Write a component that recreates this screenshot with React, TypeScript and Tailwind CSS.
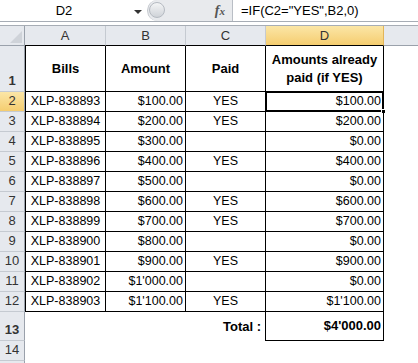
const rows: [string, string, string, string][] = [
  ["XLP-838893", "$100.00", "YES", "$100.00"],
  ["XLP-838894", "$200.00", "YES", "$200.00"],
  ["XLP-838895", "$300.00", "", "$0.00"],
  ["XLP-838896", "$400.00", "YES", "$400.00"],
  ["XLP-838897", "$500.00", "", "$0.00"],
  ["XLP-838898", "$600.00", "YES", "$600.00"],
  ["XLP-838899", "$700.00", "YES", "$700.00"],
  ["XLP-838900", "$800.00", "", "$0.00"],
  ["XLP-838901", "$900.00", "YES", "$900.00"],
  ["XLP-838902", "$1'000.00", "", "$0.00"],
  ["XLP-838903", "$1'100.00", "YES", "$1'100.00"],
];

function RowHead({ n, sel, h }: { n?: number; sel?: boolean; h: string }) {
  return (
    <div
      className={`${h} w-[25px] shrink-0 flex items-end justify-center pb-[1px] border-r border-b border-r-[#9aa1ab] border-b-[#c5cad1] text-[13px] text-[#333] ${
        sel ? "bg-gradient-to-b from-[#fbe6a6] to-[#f5cd6f]" : "bg-[#e6e9ee]"
      }`}
    >
      {n}
    </div>
  );
}

export default function App() {
  return (
    <div className="w-[418px] h-[363px] overflow-hidden bg-white text-black" style={{ fontFamily: '"Liberation Sans", Arial, sans-serif' }}>
      {/* formula bar */}
      <div className="flex h-[22px] border-b border-[#a7adb5]">
        <div className="w-[147px] relative flex items-center bg-white">
          <div className="w-[128px] text-center text-[13px]">D2</div>
          <div className="absolute left-[134px] top-[10px] w-0 h-0 border-l-[4px] border-r-[4px] border-t-[4px] border-l-transparent border-r-transparent border-t-[#333]" />
        </div>
        <div className="w-[86px] flex items-center bg-[#e8eaed] border-r border-[#b9bec5] rounded-l-[11px] border-l border-l-[#c3c7cd] relative">
          <div className="absolute left-[1px] top-[2px] w-[16px] h-[16px] rounded-full bg-gradient-to-b from-[#f4f5f6] to-[#cfd3d8] border border-[#b5bac1]" />
          <div className="ml-auto mr-[7px] italic font-bold text-[14px] text-[#555]" style={{ fontFamily: '"Liberation Serif", serif' }}>
            f<span className="text-[11px]">x</span>
          </div>
        </div>
        <div className="flex-1 flex items-center pl-[8px] text-[13px]">=IF(C2="YES",B2,0)</div>
      </div>
      <div className="h-[3px] bg-white" />

      {/* column headers */}
      <div className="flex h-[21px] border-t border-[#a7adb5] text-[13px] text-[#333]">
        <div className="w-[25px] shrink-0 bg-[#e6e9ee] border-r border-[#9aa1ab] relative border-b border-b-[#9aa1ab]">
          <div className="absolute right-[2px] bottom-[2px] w-0 h-0 border-l-[12px] border-t-[12px] border-l-transparent border-t-transparent border-b-0 border-r-0" style={{ borderBottom: "12px solid #cfd3d9", borderLeftWidth: 12 }} />
        </div>
        <div className="w-[81px] bg-[#e6e9ee] border-r border-[#c5cad1] border-b border-b-black flex items-center justify-center">A</div>
        <div className="w-[80px] bg-[#e6e9ee] border-r border-[#c5cad1] border-b border-b-black flex items-center justify-center">B</div>
        <div className="w-[80px] bg-[#e6e9ee] border-r border-[#c5cad1] border-b border-b-black flex items-center justify-center">C</div>
        <div className="w-[118px] bg-gradient-to-b from-[#fbe6a6] to-[#f5cd6f] border-r border-[#e2b558] border-b border-b-black flex items-center justify-center">D</div>
        <div className="flex-1 bg-[#e6e9ee] border-b border-[#9aa1ab]" />
      </div>

      {/* row 1 */}
      <div className="flex h-[46px] text-[13px] font-bold">
        <RowHead n={1} h="h-[46px]" />
        <div className="w-[81px] border-l border-r border-b border-black flex items-center justify-center">Bills</div>
        <div className="w-[80px] border-r border-b border-black flex items-center justify-center">Amount</div>
        <div className="w-[80px] border-r border-b border-black flex items-center justify-center">Paid</div>
        <div className="w-[118px] border-r border-b border-black flex items-center justify-center text-center leading-[18px]">
          Amounts already
          <br />
          paid (if YES)
        </div>
        <div className="flex-1" />
      </div>

      {rows.map((r, i) => (
        <div key={r[0]} className="flex h-[20px] text-[12.5px]">
          <RowHead n={i + 2} sel={i === 0} h="h-[20px]" />
          <div className="w-[81px] border-l border-r border-b border-black flex items-center justify-center">{r[0]}</div>
          <div className="w-[80px] border-r border-b border-black flex items-center justify-end pr-[2px]">{r[1]}</div>
          <div className="w-[80px] border-r border-b border-black flex items-center justify-center">{r[2]}</div>
          <div className="w-[118px] border-r border-b border-black flex items-center justify-end pr-[2px] relative">
            {r[3]}
            {i === 0 && (
              <>
                <div className="absolute -left-[1px] -top-[1px] -right-[1px] -bottom-[1px] border-2 border-black shadow-[inset_0_0_0_1px_#fff]" />
                <div className="absolute -right-[3px] -bottom-[3px] w-[5px] h-[5px] bg-black border border-white" />
              </>
            )}
          </div>
          <div className="flex-1" />
        </div>
      ))}

      {/* row 13 */}
      <div className="flex h-[29px] text-[13px] font-bold">
        <RowHead n={13} h="h-[29px]" />
        <div className="w-[81px]" />
        <div className="w-[80px]" />
        <div className="w-[80px] border-r border-black flex items-center justify-end pr-[4px]">Total :</div>
        <div className="w-[118px] border-r border-b border-black flex items-center justify-end pr-[2px]">$4'000.00</div>
        <div className="flex-1" />
      </div>
      <div className="flex h-[20px] text-[13px]">
        <RowHead n={14} h="h-[20px]" />
        <div className="flex-1" />
      </div>
      <div className="flex h-[20px] text-[13px]">
        <RowHead h="h-[20px]" />
        <div className="flex-1" />
      </div>
    </div>
  );
}
